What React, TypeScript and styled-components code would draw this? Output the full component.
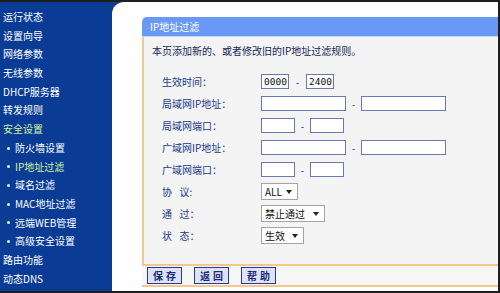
import React from 'react'
import styled, { createGlobalStyle } from 'styled-components'

const GlobalStyle = createGlobalStyle`
  html, body {
    margin: 0;
    padding: 0;
    background: #ffffff;
  }
  * {
    box-sizing: border-box;
  }
`

const font = `"Noto Sans CJK SC", "Liberation Sans", sans-serif`

const Frame = styled.div`
  width: 500px;
  height: 293px;
  display: flex;
  background: #0a3c96;
  border-top: 2px solid #1e1e1e;
  border-right: 2px solid #1e1e1e;
  border-bottom: 2px solid #1e1e1e;
  font-family: ${font};
  font-size: 10px;
  overflow: hidden;
`

const Sidebar = styled.ul`
  width: 112px;
  flex-shrink: 0;
  margin: 0;
  padding: 6px 0 0 3px;
  list-style: none;
`

const MenuItem = styled.li<{ $sub?: boolean; $active?: boolean }>`
  height: 18.7px;
  line-height: 18.7px;
  display: flex;
  align-items: center;
  gap: 5px;
  padding-left: ${p => (p.$sub ? '4px' : '0')};
  color: ${p => (p.$active ? '#d6f29c' : '#ffffff')};
  white-space: nowrap;
`

const Dot = styled.span`
  width: 3px;
  height: 3px;
  border-radius: 50%;
  background: #d8f6c8;
`

const Main = styled.div`
  flex: 1;
  background: #ffffff;
  border-top-left-radius: 12px;
  padding: 15px 0 4px 30px;
  display: flex;
`

const Panel = styled.div`
  flex: 1;
  display: flex;
  flex-direction: column;
`

const Header = styled.div`
  height: 20px;
  line-height: 19px;
  background: #6a98f7;
  border-bottom: 1px solid #c6d6f6;
  border-top-left-radius: 5px;
  color: #ffffff;
  padding-left: 8px;
`

const Body = styled.div`
  flex: 1;
  background: #f4f4f4;
  border-left: 2px solid #f4c690;
  padding: 7px 0 0 8px;
`

const Desc = styled.div`
  height: 14px;
  line-height: 14px;
  color: #18245a;
  margin-bottom: 12.5px;
`

const Row = styled.div`
  height: 22px;
  display: flex;
  align-items: center;
`

const Label = styled.div`
  width: 109px;
  padding-left: 10px;
  color: #203a8a;
  white-space: pre;
`

const Field = styled.div`
  display: flex;
  align-items: center;
`

const Input = styled.div<{ $w: number }>`
  width: ${p => p.$w}px;
  height: 15px;
  background: #ffffff;
  border: 1px solid #6a78b4;
  font-family: "DejaVu Sans Mono", monospace;
  font-size: 9.5px;
  line-height: 13px;
  padding-left: 2px;
  color: #111;
`

const Dash = styled.span<{ $w: number }>`
  width: ${p => p.$w}px;
  text-align: center;
  color: #203a8a;
`

const Select = styled.div<{ $w: number }>`
  width: ${p => p.$w}px;
  height: 17px;
  background: #ffffff;
  border: 1px solid #a4a4a4;
  display: flex;
  align-items: center;
  justify-content: space-between;
  padding: 0 5px 0 3px;
  color: #111;
  font-size: 10px;
`

const Arrow = styled.span`
  width: 0;
  height: 0;
  border-left: 3px solid transparent;
  border-right: 3px solid transparent;
  border-top: 4px solid #222;
`

const Footer = styled.div`
  height: 23px;
  background: #f6f6f6;
  border-top: 2px solid #f4c690;
  border-bottom: 2px solid #f4c690;
  display: flex;
  align-items: center;
  gap: 12px;
  padding-left: 5px;
`

const Button = styled.div`
  width: 35px;
  height: 17px;
  line-height: 15px;
  text-align: center;
  background: #dde2f6;
  border: 1px solid #2a3a86;
  color: #1a2a7a;
  font-weight: 700;
  letter-spacing: 3px;
  padding-left: 3px;
`

const menu = [
  { t: '运行状态' },
  { t: '设置向导' },
  { t: '网络参数' },
  { t: '无线参数' },
  { t: 'DHCP服务器' },
  { t: '转发规则' },
  { t: '安全设置', active: true },
  { t: '防火墙设置', sub: true },
  { t: 'IP地址过滤', sub: true, active: true },
  { t: '域名过滤', sub: true },
  { t: 'MAC地址过滤', sub: true },
  { t: '远端WEB管理', sub: true },
  { t: '高级安全设置', sub: true },
  { t: '路由功能' },
  { t: '动态DNS' },
]

const gap = '\u2002\u2005'

function IpPair() {
  return (
    <Field>
      <Input $w={85} />
      <Dash $w={15}>-</Dash>
      <Input $w={85} />
    </Field>
  )
}

function PortPair() {
  return (
    <Field>
      <Input $w={34} />
      <Dash $w={15}>-</Dash>
      <Input $w={34} />
    </Field>
  )
}

export default function App() {
  return (
    <>
      <GlobalStyle />
      <Frame>
        <Sidebar>
          {menu.map(m => (
            <MenuItem key={m.t} $sub={m.sub} $active={m.active}>
              {m.sub && <Dot />}
              {m.t}
            </MenuItem>
          ))}
        </Sidebar>
        <Main>
          <Panel>
            <Header>IP地址过滤</Header>
            <Body>
              <Desc>本页添加新的、或者修改旧的IP地址过滤规则。</Desc>
              <Row>
                <Label>生效时间：</Label>
                <Field>
                  <Input $w={28}>0000</Input>
                  <Dash $w={17}>-</Dash>
                  <Input $w={28}>2400</Input>
                </Field>
              </Row>
              <Row>
                <Label>局域网IP地址：</Label>
                <IpPair />
              </Row>
              <Row>
                <Label>局域网端口：</Label>
                <PortPair />
              </Row>
              <Row>
                <Label>广域网IP地址：</Label>
                <IpPair />
              </Row>
              <Row>
                <Label>广域网端口：</Label>
                <PortPair />
              </Row>
              <Row>
                <Label>{`协${gap}议:`}</Label>
                <Select $w={37}>ALL<Arrow /></Select>
              </Row>
              <Row>
                <Label>{`通${gap}过：`}</Label>
                <Select $w={64}>禁止通过<Arrow /></Select>
              </Row>
              <Row>
                <Label>{`状${gap}态：`}</Label>
                <Select $w={43}>生效<Arrow /></Select>
              </Row>
            </Body>
            <Footer>
              <Button>保存</Button>
              <Button>返回</Button>
              <Button>帮助</Button>
            </Footer>
          </Panel>
        </Main>
      </Frame>
    </>
  )
}
